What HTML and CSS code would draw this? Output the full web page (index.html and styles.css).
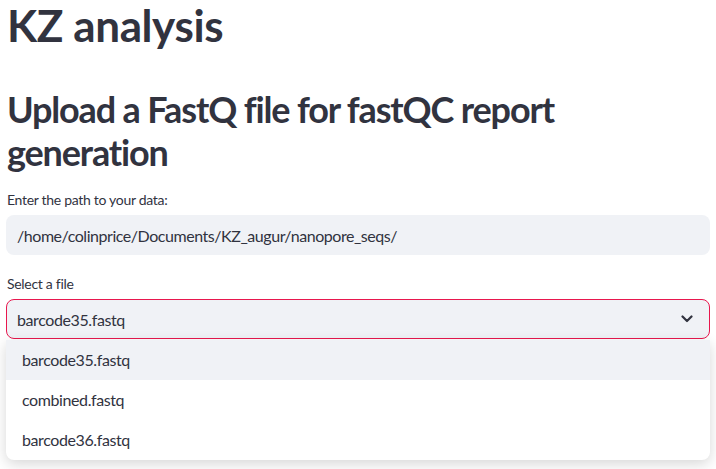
FILE: index.html
```html
<!DOCTYPE html>
<html lang="en">
<head>
<meta charset="utf-8">
<title>KZ analysis</title>
<link rel="stylesheet" href="styles.css">
</head>
<body>
<main class="page">
  <h1 class="title">KZ analysis</h1>
  <h2 class="subtitle">Upload a FastQ file for fastQC report generation</h2>

  <div class="field">
    <label class="field-label">Enter the path to your data:</label>
    <div class="text-input">/home/colinprice/Documents/KZ_augur/nanopore_seqs/</div>
  </div>

  <div class="field field-select">
    <label class="field-label">Select a file</label>
    <div class="select">
      <span class="select-value">barcode35.fastq</span>
      <svg class="chevron" width="12" height="8" viewBox="0 0 12 8" aria-hidden="true">
        <path d="M1.5 1.5 L6 6 L10.5 1.5" fill="none" stroke="#31333f" stroke-width="2.2" stroke-linecap="round" stroke-linejoin="round"/>
      </svg>
    </div>
    <ul class="menu">
      <li class="menu-item is-active">barcode35.fastq</li>
      <li class="menu-item">combined.fastq</li>
      <li class="menu-item">barcode36.fastq</li>
    </ul>
  </div>
</main>
</body>
</html>
```

FILE: styles.css
```css
* { box-sizing: border-box; }
html, body { margin: 0; padding: 0; background: #ffffff; }
body {
  font-family: "Lato", "Open Sans", "Liberation Sans", sans-serif;
  color: #31333f;
  width: 716px;
  height: 469px;
  overflow: hidden;
}
.page {
  padding: 0 6px 0 6px;
  width: 716px;
}
.title {
  margin: 0;
  padding-top: 0;
  font-size: 44px;
  font-weight: 700;
  line-height: 50px;
  padding-left: 1px;
  letter-spacing: -0.4px;
}
.subtitle {
  margin: 38px 0 0 0;
  font-size: 36px;
  font-weight: 700;
  line-height: 43px;
  padding-left: 1px;
  width: 600px;
  letter-spacing: -1.15px;
}
.field { margin-top: 16px; }
.field-label {
  display: block;
  font-size: 14px;
  line-height: 20px;
  padding-left: 1px;
  margin-bottom: 5px;
  letter-spacing: -0.3px;
}
.text-input {
  height: 40px;
  width: 704px;
  background: #f0f2f6;
  border-radius: 8px;
  padding: 0 11px;
  display: flex;
  align-items: center;
  font-size: 16px;
  letter-spacing: -0.45px;
}
.field-select { margin-top: 19px; position: relative; }
.select {
  height: 40px;
  width: 704px;
  background: #f0f2f6;
  border: 1px solid #e8174e;
  border-radius: 8px;
  padding: 0 10px;
  display: flex;
  align-items: center;
  justify-content: space-between;
  font-size: 16px;
  letter-spacing: -0.4px;
}
.chevron { margin-right: 6px; }
.menu {
  list-style: none;
  margin: 1px 0 0 0;
  padding: 0;
  width: 704px;
  background: #fff;
  border-radius: 0 0 8px 8px;
  box-shadow: 0 4px 14px rgba(0,0,0,0.16);
  overflow: hidden;
}
.menu-item {
  height: 40px;
  display: flex;
  align-items: center;
  padding-left: 16px;
  padding-bottom: 2px;
  font-size: 16px;
  letter-spacing: -0.4px;
}
.menu-item.is-active { background: #f0f2f6; }
```
